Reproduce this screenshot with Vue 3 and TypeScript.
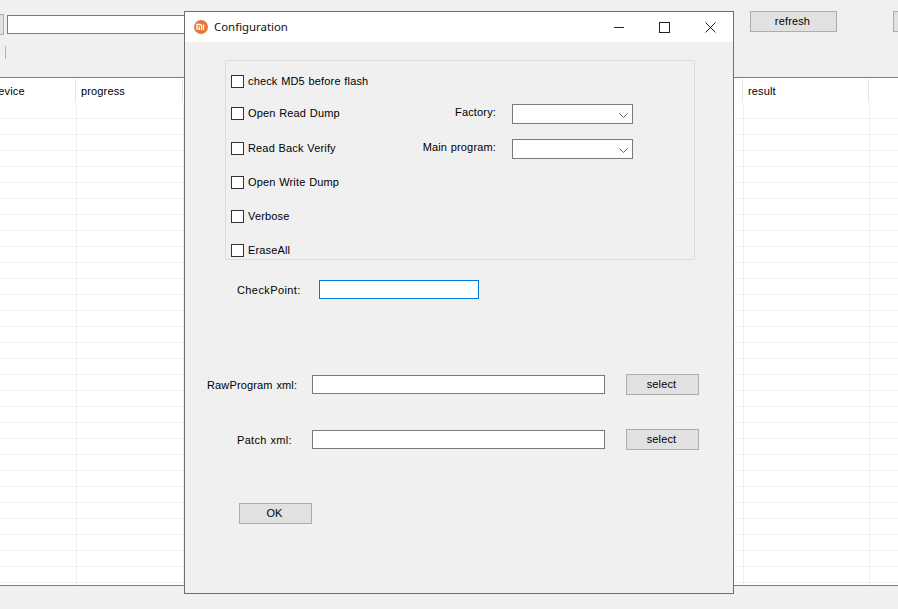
<script setup lang="ts">
const rowCount = 31
const rows = Array.from({ length: rowCount }, (_, i) => i)

const checks = [
  { label: 'check MD5 before flash', gap: 0 },
  { label: 'Open Read Dump', gap: 19 },
  { label: 'Read Back Verify', gap: 22 },
  { label: 'Open Write Dump', gap: 21 },
  { label: 'Verbose', gap: 21 },
  { label: 'EraseAll', gap: 21 },
]
</script>

<template>
  <div class="page">
    <div class="toolbar">
      <div class="top-row">
        <button class="btn cut-btn"></button>
        <input class="field path-field" type="text" />
        <button class="btn refresh-btn">refresh</button>
        <button class="btn last-btn"></button>
      </div>
      <div class="sep"></div>
    </div>

    <div class="table">
      <div class="head">
        <div class="head-cell device">device</div>
        <div class="head-cell">progress</div>
        <div class="head-cell"></div>
        <div class="head-cell">result</div>
        <div></div>
      </div>
      <div v-for="r in rows" :key="r" class="row">
        <div class="cell"></div>
        <div class="cell"></div>
        <div class="cell"></div>
        <div class="cell"></div>
        <div></div>
      </div>
    </div>

    <div class="dialog">
      <div class="titlebar">
        <svg class="logo" width="14" height="14" viewBox="0 0 14 14">
          <circle cx="7" cy="7" r="7" fill="#e8773c" />
          <path d="M3 10V4.500H6.200Q7.500 4.500 7.500 5.800V10M5.250 6.500V10M9.500 4.500V10" fill="none" stroke="#fff" stroke-width="1.300" />
        </svg>
        <span class="title">Configuration</span>
        <div class="win-btns">
          <svg class="min-icon" width="11" height="11" viewBox="0 0 11 11"><path d="M0 5.500H10" stroke="#222" fill="none" /></svg>
          <svg width="11" height="11" viewBox="0 0 11 11"><rect x="0.500" y="0.500" width="10" height="10" stroke="#222" fill="none" /></svg>
          <svg width="11" height="11" viewBox="0 0 11 11"><path d="M0.500 0.500L10.500 10.500M10.500 0.500L0.500 10.500" stroke="#222" fill="none" /></svg>
        </div>
      </div>

      <div class="body">
        <div class="group">
          <div class="checks">
            <label v-for="c in checks" :key="c.label" class="check" :style="{ marginTop: c.gap + 'px' }">
              <span class="box"></span>
              <span class="check-text">{{ c.label }}</span>
            </label>
          </div>
          <div class="combos">
            <div class="combo-row">
              <span class="combo-label">Factory:</span>
              <div class="combo">
                <svg width="9" height="5" viewBox="0 0 9 5"><path d="M0.500 0.500L4.500 4.500L8.500 0.500" stroke="#666" fill="none" /></svg>
              </div>
            </div>
            <div class="combo-row">
              <span class="combo-label">Main program:</span>
              <div class="combo">
                <svg width="9" height="5" viewBox="0 0 9 5"><path d="M0.500 0.500L4.500 4.500L8.500 0.500" stroke="#666" fill="none" /></svg>
              </div>
            </div>
          </div>
        </div>

        <div class="point-row">
          <span class="point-label">CheckPoint:</span>
          <input class="field point-field" type="text" />
        </div>

        <div class="file-row raw-row">
          <span class="raw-label">RawProgram xml:</span>
          <input class="field file-field" type="text" />
          <button class="btn select-btn">select</button>
        </div>

        <div class="file-row patch-row">
          <span class="patch-label">Patch xml:</span>
          <input class="field file-field" type="text" />
          <button class="btn select-btn">select</button>
        </div>

        <button class="btn ok-btn">OK</button>
      </div>
    </div>
  </div>
</template>

<style scoped>
.page {
  position: relative;
  width: 898px;
  height: 609px;
  overflow: hidden;
  background: #f0f0f0;
  font-family: "Liberation Sans", sans-serif;
  font-size: 11px;
  letter-spacing: 0.15px;
  word-spacing: 0.5px;
  color: #000;
}

.toolbar {
  height: 77px;
  box-sizing: border-box;
  padding-top: 11px;
}

.top-row {
  display: flex;
  align-items: flex-start;
  height: 35px;
}

.btn {
  box-sizing: border-box;
  flex-shrink: 0;
  height: 21px;
  width: 73px;
  padding: 0 2px 2px 0;
  background: #e1e1e1;
  border: 1px solid #adadad;
  font: inherit;
  letter-spacing: inherit;
  word-spacing: inherit;
  color: inherit;
}

.field {
  box-sizing: border-box;
  flex-shrink: 0;
  height: 19px;
  background: #fff;
  border: 1px solid #7a7a7a;
  padding: 0;
  outline: none;
}

.cut-btn {
  width: 20px;
  margin: 3px 0 0 -16px;
}

.path-field {
  width: 300px;
  margin: 4px 0 0 3px;
}

.refresh-btn {
  width: 87px;
  margin-left: 443px;
}

.last-btn {
  width: 87px;
  margin-left: 56px;
}

.sep {
  width: 1px;
  height: 13px;
  margin-left: 5px;
  background: #b4b4b4;
}

.table {
  box-sizing: border-box;
  height: 509px;
  overflow: hidden;
  background: #fff;
  border-top: 1px solid #7d7d7d;
  border-bottom: 1px solid #7d7d7d;
}

.head,
.row {
  display: grid;
  grid-template-columns: 77px 107px 560px 126px 28px;
}

.head {
  height: 25px;
}

.head-cell {
  box-sizing: border-box;
  height: 23px;
  margin: 1px 1px 0 0;
  padding: 1px 0 0 4px;
  border-right: 1px solid #e5e5e5;
  line-height: 22px;
  white-space: nowrap;
}

.device {
  padding-left: 0;
  text-indent: -8px;
}

.row {
  height: 16px;
}

.cell {
  box-sizing: border-box;
  border-right: 1px solid #f0f0f0;
  border-bottom: 1px solid #f0f0f0;
}

.row > div:last-child {
  border-bottom: 1px solid #f0f0f0;
}

.dialog {
  position: absolute;
  left: 184px;
  top: 11px;
  box-sizing: border-box;
  width: 550px;
  height: 583px;
  background: #f0f0f0;
  border: 1px solid #6e6e6e;
}

.titlebar {
  display: flex;
  align-items: center;
  height: 30px;
  background: #fff;
  padding-left: 9px;
}

.logo {
  flex-shrink: 0;
}

.title {
  margin: -1px 0 0 6px;
  font-family: "Noto Sans", sans-serif;
  font-size: 11.400px;
  letter-spacing: 0;
  word-spacing: 0;
  color: #111;
}

.win-btns {
  display: flex;
  gap: 35px;
  margin-left: auto;
  margin-right: 17px;
}

.min-icon {
  margin-right: -1px;
}

.body {
  padding-top: 18px;
}

.group {
  display: flex;
  box-sizing: border-box;
  width: 470px;
  height: 200px;
  margin-left: 40px;
  padding: 14px 61px 0 5px;
  border: 1px solid #dcdcdc;
}

.checks {
  display: flex;
  flex-direction: column;
}

.check {
  display: flex;
  align-items: center;
  gap: 4px;
  height: 13px;
  white-space: nowrap;
}

.check-text {
  margin-top: -1px;
}

.box {
  box-sizing: border-box;
  width: 13px;
  height: 13px;
  background: #fff;
  border: 1px solid #333;
}

.combos {
  display: flex;
  flex-direction: column;
  gap: 15px;
  margin-left: auto;
  padding-top: 29px;
}

.combo-row {
  display: flex;
  align-items: center;
  justify-content: flex-end;
  gap: 16px;
}

.combo-label {
  margin-top: -5px;
}

.combo {
  display: flex;
  align-items: center;
  justify-content: flex-end;
  box-sizing: border-box;
  width: 121px;
  height: 20px;
  padding: 2px 4px 0 0;
  background: #fff;
  border: 1px solid #7a7a7a;
}

.point-row {
  display: flex;
  align-items: center;
  margin-top: 20px;
  padding-left: 52px;
}

.point-label {
  width: 82px;
  letter-spacing: 0.4px;
}

.point-field {
  width: 160px;
  border-color: #0078d7;
}

.file-row {
  display: flex;
  align-items: center;
  height: 21px;
}

.raw-row {
  margin-top: 75px;
  padding-left: 22px;
}

.patch-row {
  margin-top: 34px;
  padding-left: 52px;
}

.raw-label {
  width: 105px;
}

.patch-label {
  width: 75px;
  letter-spacing: 0.3px;
}

.file-field {
  width: 293px;
}

.select-btn {
  margin-left: 21px;
}

.ok-btn {
  display: block;
  margin: 53px 0 0 54px;
}
</style>
